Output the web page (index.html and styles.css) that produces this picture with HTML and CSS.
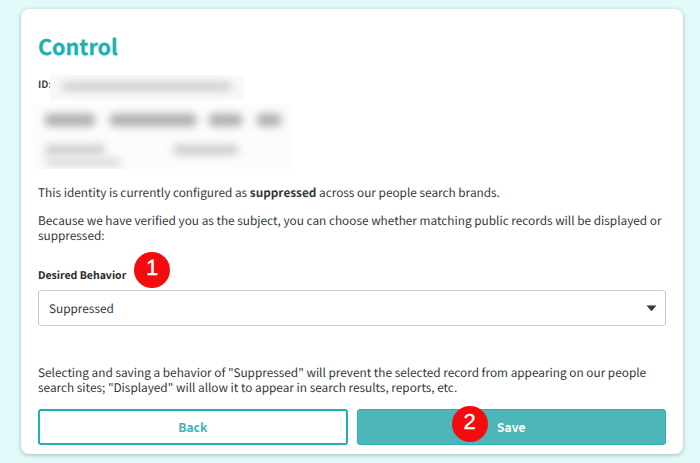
FILE: index.html
```html
<!DOCTYPE html>
<html lang="en">
<head>
<meta charset="utf-8">
<title>Control</title>
<link rel="stylesheet" href="styles.css">
</head>
<body>
<main class="card">
  <h1 class="title">Control</h1>
  <div class="id-row">
    <span class="id-label">ID:</span>
    <div class="patch patch-id"><span class="smear smear-id"></span></div>
  </div>
  <div class="patch patch-name">
    <div class="name-row">
      <span class="smear s1"></span><span class="smear s2"></span><span class="smear s3"></span><span class="smear s4"></span>
    </div>
    <div class="meta-row">
      <div class="meta-col"><span class="smear m1"></span><span class="smear m2"></span></div>
      <span class="smear m3"></span>
    </div>
  </div>
  <p class="text first">This identity is currently configured as <strong>suppressed</strong> across our people search brands.</p>
  <p class="text second">Because we have verified you as the subject, you can choose whether matching public records will be displayed or suppressed:</p>
  <div class="label-row">
    <label class="label">Desired Behavior</label>
    <span class="badge badge-one">1</span>
  </div>
  <div class="select">
    <span>Suppressed</span>
    <svg class="caret" width="11" height="7" viewBox="0 0 11 7"><path d="M0.5 0.5h10L5.5 6.2z" fill="#33363a"/></svg>
  </div>
  <p class="text note">Selecting and saving a behavior of "Suppressed" will prevent the selected record from appearing on our people search sites; "Displayed" will allow it to appear in search results, reports, etc.</p>
  <div class="actions">
    <button class="btn btn-back">Back</button>
    <button class="btn btn-save">Save<span class="badge badge-two">2</span></button>
  </div>
</main>
</body>
</html>
```

FILE: styles.css
```css
* { box-sizing: border-box; }
html, body { margin: 0; height: 463px; overflow: hidden; }
body {
  background: #e4f9f9;
  padding: 9px 17px 9px 21px;
  font-family: "Noto Sans CJK SC", "Noto Sans", sans-serif;
  color: #33363a;
  text-rendering: geometricPrecision;
}
.card {
  height: 445px;
  background: #fff;
  border-radius: 8px;
  box-shadow: 0 1px 4px rgba(60, 90, 90, 0.4);
  padding: 25px 17px 0;
}
.title {
  margin: 0;
  font-size: 21.5px;
  line-height: 26px;
  font-weight: 700;
  color: #1eb1b3;
  -webkit-text-stroke: 0.3px #1eb1b3;
}
.id-row { display: flex; align-items: flex-start; margin-top: 15px; height: 26px; }
.id-label { font-size: 10px; font-weight: 700; line-height: 18px; color: #45484c; width: 12px; white-space: nowrap; }
.patch { background: #f9f9f9; overflow: hidden; }
.patch-id { position: relative; width: 194px; height: 26px; padding: 8px 12px; }
.smear { display: block; background: #bbb; filter: blur(4px); border-radius: 4px; }
.smear-id { height: 7px; width: 170px; background: #c4c4c4; }
.patch-name {
  width: 260px;
  height: 65px;
  margin: 3px 0 0 -5px;
  background: #fcfcfc;
  padding: 8px 12px;
}
.name-row { display: flex; align-items: center; height: 15px; }
.s1 { width: 50px; height: 12px; background: #aaa; }
.s2 { width: 87px; height: 12px; margin-left: 15px; background: #aaa; }
.s3 { width: 33px; height: 12px; margin-left: 13px; background: #aaa; }
.s4 { width: 24px; height: 12px; margin-left: 15px; background: #aaa; }
.meta-row { display: flex; gap: 52px; margin-top: 18px; }
.meta-col { display: flex; flex-direction: column; gap: 4px; width: 76px; }
.m1 { width: 60px; height: 10px; background: #ccc; }
.m2 { width: 76px; height: 7px; background: #d4d4d4; }
.m3 { width: 65px; height: 10px; background: #ccc; }
.text { margin: 0; font-size: 11.82px; line-height: 15px; color: #33363a; }
.text strong { font-weight: 700; }
.first { margin-top: 16px; }
.second { margin-top: 13px; }
.label-row { position: relative; display: flex; align-items: flex-end; margin-top: 9px; height: 38px; }
.label { font-size: 10.5px; line-height: 15px; padding-bottom: 7px; font-weight: 700; color: #26292c; }
.badge {
  display: flex;
  align-items: center;
  justify-content: center;
  width: 36px;
  height: 36px;
  border-radius: 50%;
  background: #f50a0d;
  color: #fff;
  font-family: "Liberation Sans", sans-serif;
  font-size: 22px;
  font-weight: 400;
  -webkit-text-stroke: 0.4px #fff;
  padding-bottom: 4px;
}
.badge-one { position: absolute; left: 96px; top: 0; }
.select {
  display: flex;
  align-items: center;
  justify-content: space-between;
  height: 36px;
  border: 1px solid #ccc;
  border-radius: 3px;
  padding: 0 8px 0 10px;
  font-size: 11.82px;
}
.note { margin-top: 38.5px; }
.actions { display: grid; grid-template-columns: 1fr 1fr; gap: 9px; margin-top: 14px; }
.btn {
  height: 36px;
  border-radius: 3px;
  font-family: inherit;
  font-size: 12px;
  font-weight: 700;
  padding: 0;
}
.btn-back { background: #fff; border: 2px solid #1eb1b3; color: #3cb4b6; }
.btn-save { position: relative; background: #4cb6b9; border: 1px solid #2bb0b3; color: #fff; }
.badge-two { position: absolute; left: 94px; top: -4px; }
```
